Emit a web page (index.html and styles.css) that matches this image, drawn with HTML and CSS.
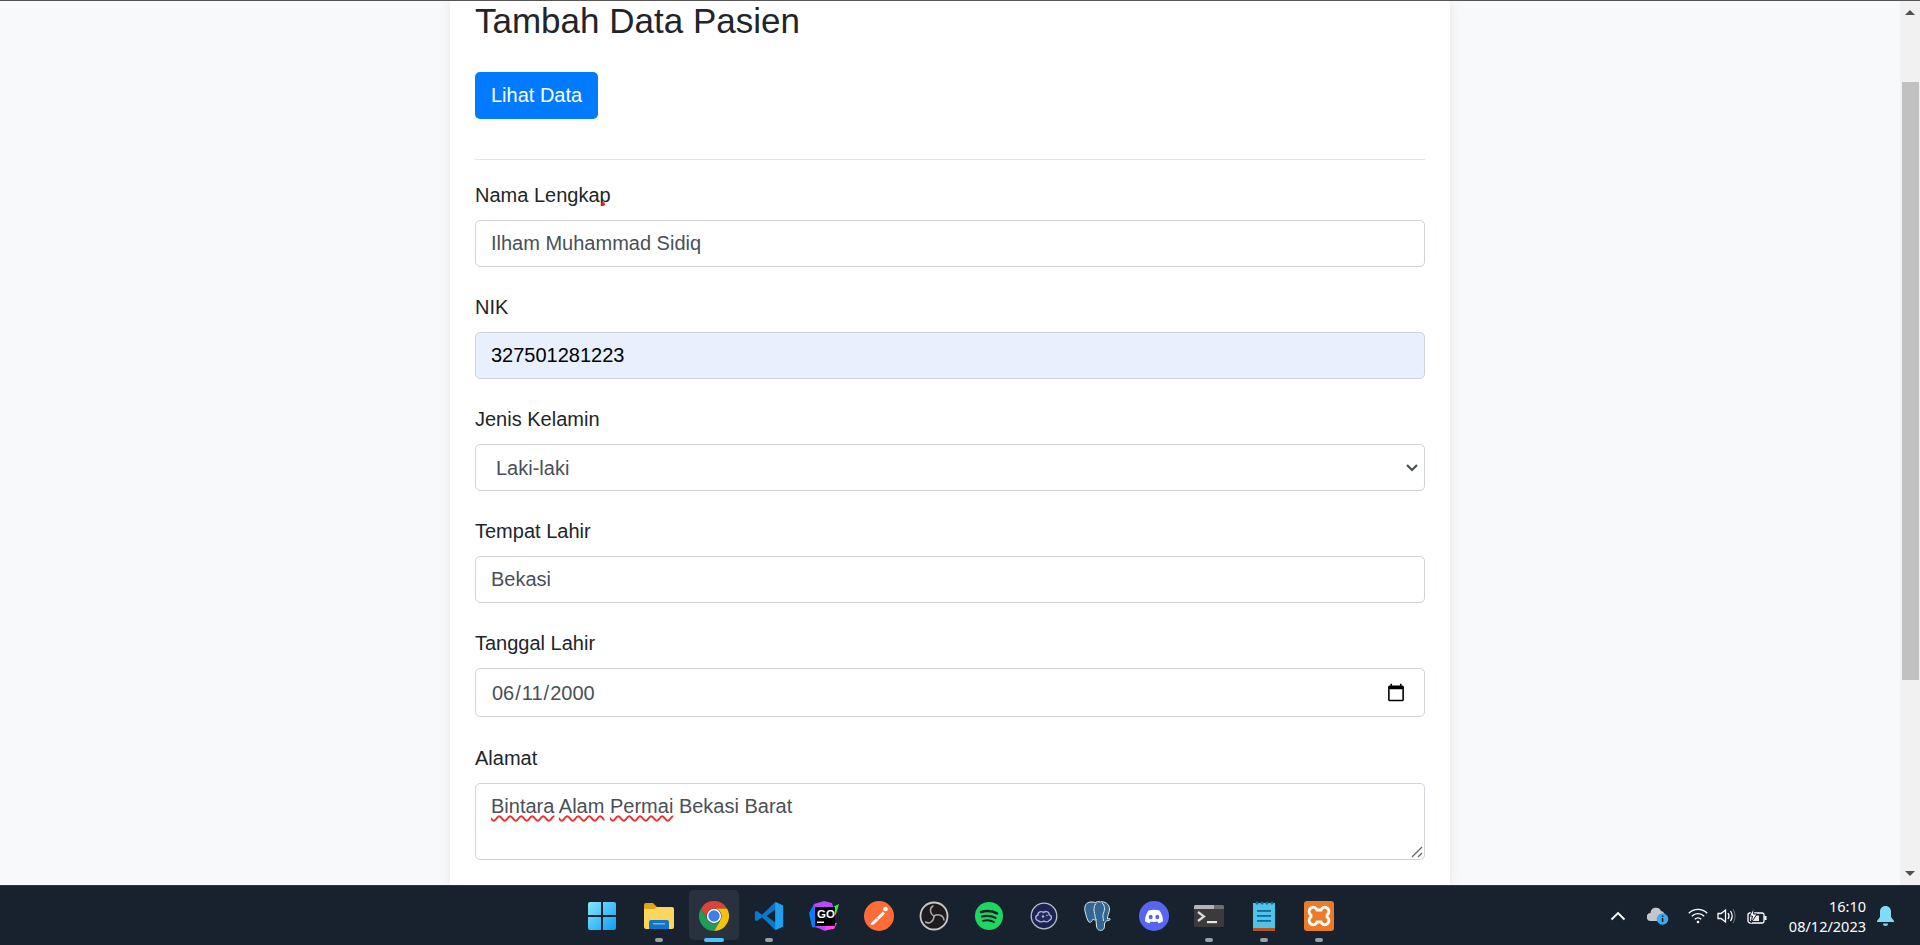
FILE: index.html
```html
<!DOCTYPE html>
<html lang="en">
<head>
<meta charset="UTF-8">
<meta name="viewport" content="width=device-width, initial-scale=1.0">
<title>Tambah Data Pasien</title>
<link rel="stylesheet" href="styles.css">
</head>

<body>
    <div class="screen">
        <div class="page">
            <main class="content">
                <div class="card">
                    <h2 class="title">Tambah Data Pasien</h2>
                    <a class="btn" href="#">Lihat Data</a>
                    <hr class="divider">
                    <form>
                        <div class="form-group">
                            <label for="nama">Nama Lengkap</label>
                            <span class="red-dot"></span>
                            <input class="form-control" id="nama" type="text" value="Ilham Muhammad Sidiq">
                        </div>
                        <div class="form-group">
                            <label for="nik">NIK</label>
                            <input class="form-control autofilled" id="nik" type="text" value="327501281223">
                        </div>
                        <div class="form-group">
                            <label for="jk">Jenis Kelamin</label>
                            <select class="form-control select-control" id="jk">
                                <option>Laki-laki</option>
                                <option>Perempuan</option>
                            </select>
                        </div>
                        <div class="form-group">
                            <label for="tempat">Tempat Lahir</label>
                            <input class="form-control" id="tempat" type="text" value="Bekasi">
                        </div>
                        <div class="form-group date-group">
                            <label for="tgl">Tanggal Lahir</label>
                            <input class="form-control date-control" id="tgl" type="date" value="2000-06-11">
                        </div>
                        <div class="form-group">
                            <label>Alamat</label>
                            <div class="form-control textarea-control" contenteditable="true"><span class="typo">Bintara</span> <span class="typo">Alam</span> <span class="typo">Permai</span> Bekasi Barat</div>
                        </div>
                    </form>
                </div>
            </main>
            <div class="scrollbar">
                <span class="arrow-up"></span>
                <div class="thumb"></div>
                <span class="arrow-down"></span>
            </div>
        </div>

        <footer class="taskbar">
            <div class="task-icons">
                <!-- start -->
                <div class="task-icon">
                    <svg class="start-icon" width="30" height="30" viewBox="0 0 30 30">
                        <defs><linearGradient id="win" x1="0" y1="0" x2="1" y2="1"><stop offset="0" stop-color="#86e8fb"/><stop offset="1" stop-color="#0a9df2"/></linearGradient></defs>
                        <path fill="url(#win)" d="M1 3a2 2 0 0 1 2-2h11v13H1zM16 1h11a2 2 0 0 1 2 2v11H16zM1 16h13v13H3a2 2 0 0 1-2-2zM16 16h13v11a2 2 0 0 1-2 2H16z"/>
                    </svg>
                </div>
                <!-- explorer -->
                <div class="task-icon has-dot">
                    <svg width="30" height="26" viewBox="0 0 30 26">
                        <path fill="#e2a418" d="M0 2a2 2 0 0 1 2-2h7l4 4h15v6H0z"/>
                        <path fill="#fdd75c" d="M0 6h10l3-2h15a2 2 0 0 1 2 2v18a2 2 0 0 1-2 2H2a2 2 0 0 1-2-2z"/>
                        <path fill="#1273c9" d="M5 19a2 2 0 0 1 2-2h16a2 2 0 0 1 2 2v7H5z"/>
                        <rect x="9" y="20" width="12" height="1.500" fill="#6fb9ee"/>
                    </svg>
                </div>
                <!-- chrome -->
                <div class="task-icon active has-dot">
                    <svg width="30" height="30" viewBox="0 0 30 30">
                        <path fill="#db4437" d="M2 7.500a15 15 0 0 1 26 0H15a7.500 7.500 0 0 0-6.500 11.250z"/>
                        <path fill="#f4c20d" d="M28 7.500A15 15 0 0 1 15 30l6.500-11.250A7.500 7.500 0 0 0 15 7.500z"/>
                        <path fill="#1f9d55" d="M15 30A15 15 0 0 1 2 7.500l6.500 11.250A7.500 7.500 0 0 0 21.500 18.750z"/>
                        <circle cx="15" cy="15" r="7.200" fill="#fff"/>
                        <circle cx="15" cy="15" r="5.700" fill="#3f7ee8"/>
                    </svg>
                </div>
                <!-- vscode -->
                <div class="task-icon has-dot">
                    <svg width="30" height="30" viewBox="0 0 100 100">
                        <path fill="#0a78cc" fill-rule="evenodd" d="M71 3 27 46 10 33l-7 3v28l7 3 17-13 44 43 26-12V15zm0 25v44L42 50z"/>
                        <path fill="#22a0f0" d="M71 3l26 12v70L71 97z"/>
                    </svg>
                </div>
                <!-- goland -->
                <div class="task-icon">
                    <svg width="30" height="30" viewBox="0 0 30 30">
                        <path fill="#087cfa" d="M5 3 0 12l3 14 9 1z"/>
                        <path fill="#b74af7" d="M5 3l10-3 8 2 3 10-2 15-8 3-9-4z"/>
                        <path fill="#ff45ed" d="M18 22h10l-3 6-9 1z"/>
                        <path fill="#3bea62" d="M24 6l6-3-3 10-2 2z"/>
                        <rect x="6" y="6" width="20" height="19" fill="#000"/>
                        <text class="go-text" x="8" y="16.500">GO</text>
                        <rect x="8" y="20.500" width="7" height="1.500" fill="#fff"/>
                    </svg>
                </div>
                <!-- postman -->
                <div class="task-icon">
                    <svg width="30" height="30" viewBox="0 0 30 30">
                        <circle cx="15" cy="15" r="15" fill="#ff6c37"/>
                        <circle cx="21.500" cy="8" r="2.300" fill="#fff"/>
                        <path fill="#fff" d="M19 10.500 21 12.500 11.500 22 9.500 23.500 7.500 24 6.500 23 8 21z"/>
                        <path fill="none" stroke="#ff6c37" stroke-width=".8" d="M12 16.500l2 2"/>
                    </svg>
                </div>
                <!-- obs -->
                <div class="task-icon">
                    <svg width="30" height="30" viewBox="0 0 30 30">
                        <circle cx="15" cy="15" r="13.500" fill="#1d1b1e" stroke="#c9c9c9" stroke-width="1.800"/>
                        <g fill="none" stroke="#a9a7aa" stroke-width="1.500" stroke-linecap="round">
                            <path d="M15 15C11 13 10 7 14 5"/>
                            <path d="M15 15C19 12.500 24.500 14 25 19"/>
                            <path d="M15 15C15 20 10.500 23.500 6.500 21"/>
                        </g>
                    </svg>
                </div>
                <!-- spotify -->
                <div class="task-icon">
                    <svg width="28" height="28" viewBox="0 0 28 28">
                        <circle cx="14" cy="14" r="14" fill="#1ed760"/>
                        <g fill="none" stroke="#14202c" stroke-linecap="round">
                            <path stroke-width="2.600" d="M6 10c5-1.500 11-1.200 16 1.300"/>
                            <path stroke-width="2.200" d="M7 14.500c4.500-1.200 9.500-.8 13.500 1.400"/>
                            <path stroke-width="1.800" d="M8 18.800c3.800-.9 7.800-.6 11 1.200"/>
                        </g>
                    </svg>
                </div>
                <!-- cloud app -->
                <div class="task-icon">
                    <svg width="28" height="28" viewBox="0 0 28 28">
                        <circle cx="14" cy="14" r="12.800" fill="#1d2350" stroke="#b9bdcc" stroke-width="1.300"/>
                        <path fill="#232b5e" stroke="#aeb4d6" stroke-width="1.300" d="M8 18.500c-3-.5-3-5 0-5.500-.5-3 3.500-4.500 5.500-2.500 2-2 6-.8 5.700 2.300 3 .5 3 5-.2 5.700-1 1.800-3.500 1.800-5 .6-1.500 1.200-4.500 1.200-6-.6z"/>
                        <circle cx="13" cy="14.500" r="1.200" fill="#aeb4d6"/>
                        <circle cx="17" cy="13.500" r=".8" fill="#aeb4d6"/>
                    </svg>
                </div>
                <!-- postgres -->
                <div class="task-icon">
                    <svg width="30" height="30" viewBox="0 0 30 30">
                        <path fill="#336791" stroke="#dfe8ef" stroke-width="1" d="M7 1c-5 0-7 4-6 9 1 4 2 9 4 11 2 1 3-1 4-3 1 1 2 1 3 1l.5 6c.5 4 3 5 6 4 2-1 2-3 2-6 0-2 1-2 2-3l3-1c2-1 0-2-2-1-.5-3 2-6 2-10 0-5-5-8-9-7-2-.5-4-.5-5 .5C10 1 8.500 1 7 1z"/>
                        <path fill="none" stroke="#dfe8ef" stroke-width="1" d="M12.500 2c-3 2-3 8-1.500 12 0 2 .5 4 1.500 5M18 2c3 2 3 7 1.500 10-1 2-.5 4 0 8"/>
                    </svg>
                </div>
                <!-- discord -->
                <div class="task-icon">
                    <svg width="30" height="30" viewBox="0 0 30 30">
                        <circle cx="15" cy="15" r="15" fill="#5865f2"/>
                        <path fill="#fff" d="M9.500 9.500Q15 7.800 20.500 9.500 24 14.500 24 20.200 22 21.800 19.500 22.300L18.400 20.600Q15 21.500 11.600 20.600L10.500 22.300Q8 21.800 6 20.200 6 14.500 9.500 9.500z"/>
                        <ellipse cx="11.700" cy="16" rx="2" ry="2.300" fill="#5865f2"/>
                        <ellipse cx="18.300" cy="16" rx="2" ry="2.300" fill="#5865f2"/>
                    </svg>
                </div>
                <!-- terminal -->
                <div class="task-icon has-dot">
                    <svg width="30" height="30" viewBox="0 0 30 30">
                        <rect y="4" width="30" height="22" rx="1.500" fill="#3b3b3b"/>
                        <path fill="#b4b4b4" d="M0 5.500A1.500 1.500 0 0 1 1.500 4H20v4H0z"/>
                        <path fill="#6e6e6e" d="M20 4h8.500A1.500 1.500 0 0 1 30 5.500V8H20z"/>
                        <path fill="none" stroke="#dcdcdc" stroke-width="2.200" d="M4 11l6 4.500L4 20"/>
                        <rect x="13" y="20" width="10" height="2.200" fill="#e6e6e6"/>
                    </svg>
                </div>
                <!-- notepad -->
                <div class="task-icon has-dot">
                    <svg width="22" height="30" viewBox="0 0 22 30">
                        <rect y="2" width="22" height="26" fill="#4fc3ea"/>
                        <rect y="27" width="22" height="3" fill="#b4551d"/>
                        <g fill="#0f6d94">
                            <circle cx="4" cy="2" r="1.500"/><circle cx="9" cy="2" r="1.500"/><circle cx="14" cy="2" r="1.500"/><circle cx="19" cy="2" r="1.500"/>
                            <rect x="4" y="9" width="14" height="1.800"/><rect x="4" y="14" width="14" height="1.800"/><rect x="4" y="19" width="14" height="1.800"/>
                        </g>
                    </svg>
                </div>
                <!-- xampp -->
                <div class="task-icon has-dot">
                    <svg width="30" height="30" viewBox="0 0 30 30">
                        <rect width="30" height="30" rx="3" fill="#ec7a26"/>
                        <path fill="none" stroke="#fff" stroke-width="2.800" d="M7 7c3-2 5 0 6 2h4c1-2 3-4 6-2 3 2 2 6 0 7v2c2 1 3 5 0 7-3 2-5 0-6-2h-4c-1 2-3 4-6 2-3-2-2-6 0-7v-2c-2-1-3-5 0-7z"/>
                    </svg>
                </div>
            </div>

            <div class="tray">
                <div class="tray-item">
                    <svg width="16" height="10" viewBox="0 0 16 10"><path fill="none" stroke="#fff" stroke-width="1.800" d="M1.500 8.500 8 2l6.500 6.500"/></svg>
                </div>
                <div class="tray-item cloud">
                    <svg width="22" height="18" viewBox="0 0 22 18">
                        <path fill="#c3c7cc" d="M4 14a4 4 0 0 1-.5-8A5.500 5.500 0 0 1 14 4a4.500 4.500 0 0 1 3 7v3z"/>
                        <circle cx="15.500" cy="12" r="5.800" fill="#3fa9ee"/>
                        <rect x="14.800" y="11" width="1.500" height="4" fill="#10202e"/>
                        <rect x="14.800" y="8.500" width="1.500" height="1.500" fill="#10202e"/>
                    </svg>
                </div>
                <div class="tray-item wifi">
                    <svg width="20" height="16" viewBox="0 0 20 16">
                        <g fill="none" stroke="#fff" stroke-width="1.400">
                            <path d="M.8 5.200a13 13 0 0 1 18.400 0"/>
                            <path d="M3.800 8.200a8.800 8.800 0 0 1 12.400 0"/>
                            <path d="M6.800 11.200a4.500 4.500 0 0 1 6.400 0"/>
                        </g>
                        <circle cx="10" cy="14" r="1.300" fill="#fff"/>
                    </svg>
                </div>
                <div class="tray-item volume">
                    <svg width="20" height="16" viewBox="0 0 20 16">
                        <path fill="none" stroke="#fff" stroke-width="1.300" d="M1 5.500h3L8.500 2v12L4 10.500H1z"/>
                        <path fill="none" stroke="#fff" stroke-width="1.300" d="M11 5c1.200 1.800 1.200 4.200 0 6M13.500 3c2 3 2 7 0 10"/>
                        <path fill="none" stroke="#667" stroke-width="1.100" d="M16 1c2.700 4 2.700 10 0 14"/>
                    </svg>
                </div>
                <div class="tray-item battery">
                    <svg width="20" height="18" viewBox="0 0 20 18">
                        <rect x="1" y="6" width="16" height="10" rx="2" fill="none" stroke="#fff" stroke-width="1.300"/>
                        <rect x="17.500" y="9" width="2" height="4" fill="#fff"/>
                        <path fill="#e8e8e8" d="M3 8.500h9v5.500H3z"/>
                        <path fill="#fff" stroke="#16212e" stroke-width="1" d="M7 .5 2.500 9h3L4 16l6-9H6.500z"/>
                    </svg>
                </div>
                <div class="clock">
                    <div>16:10</div>
                    <div>08/12/2023</div>
                </div>
                <div class="tray-item bell">
                    <svg width="17" height="20" viewBox="0 0 17 20">
                        <path fill="#7fdcf7" d="M8.500 0C5 0 3 2.500 3 6v5l-3 4v1h17v-1l-3-4V6c0-3.500-2-6-5.500-6z"/>
                        <path fill="#7fdcf7" d="M6 17.500h5A2.500 2.500 0 0 1 6 17.500z"/>
                    </svg>
                </div>
            </div>
        </footer>
    </div>
</body>
</html>
```

FILE: styles.css
```css
body {
    font-family: "Liberation Sans", Arial, sans-serif;
    margin: 0;
    padding: 0;
    background-color: #f8f9fa;
    color: #212529;
    overflow: hidden;
}

.screen {
    height: 945px;
    display: flex;
    flex-direction: column;
}

.page {
    flex: 1;
    display: flex;
    min-height: 0;
    border-top: 1px solid #555;
}

.content {
    flex: 1;
    display: flex;
    justify-content: center;
    overflow: hidden;
}

/* card */
.card {
    width: 1000px;
    height: 100%;
    box-sizing: border-box;
    padding: 0 25px;
    background-color: white;
    box-shadow: 0 0 12px rgba(0, 0, 0, 0.08);
}

.title {
    font-size: 35px;
    font-weight: 400;
    line-height: 42px;
    margin: -1px 0 30px;
}

.btn {
    display: inline-block;
    height: 47px;
    box-sizing: border-box;
    padding: 0 16px;
    line-height: 47px;
    font-size: 20px;
    color: white;
    text-decoration: none;
    background-color: #007bff;
    border-radius: 5px;
    vertical-align: top;
}

.divider {
    border: 0;
    border-top: 1px solid #e3e4e6;
    margin: 40px 0 20px;
}

/* form */
.form-group {
    position: relative;
    margin-bottom: 25px;
}

.date-group {
    margin-bottom: 26px;
}

.form-group label {
    display: block;
    font-size: 20px;
    line-height: 30px;
    margin-bottom: 10px;
}

.red-dot {
    position: absolute;
    left: 126px;
    top: 22px;
    width: 4px;
    height: 4px;
    border-radius: 50%;
    background-color: #e8201c;
}

.form-control {
    display: block;
    width: 100%;
    height: 47px;
    box-sizing: border-box;
    padding: 7px 15px;
    font-family: inherit;
    font-size: 20px;
    line-height: 30px;
    color: #495057;
    background-color: white;
    border: 1px solid #ced4da;
    border-radius: 5px;
}

.autofilled {
    background-color: #e8f0fe;
    color: black;
}

.select-control {
    appearance: none;
    padding-left: 20px;
    background-image: url("data:image/svg+xml,%3Csvg xmlns='http://www.w3.org/2000/svg' width='12' height='8'%3E%3Cpath fill='none' stroke='%23495057' stroke-width='2.200' d='M1 1l5 5 5-5'/%3E%3C/svg%3E");
    background-repeat: no-repeat;
    background-position: right 6px center;
}

.date-control {
    height: 49px;
}

.date-control::-webkit-calendar-picker-indicator {
    width: 20px;
    height: 20px;
    padding: 0;
    margin-right: 3px;
}

.textarea-control {
    height: 77px;
    resize: vertical;
    overflow: auto;
    padding-top: 7px;
}

.textarea-control::-webkit-resizer {
    background-image: url("data:image/svg+xml,%3Csvg xmlns='http://www.w3.org/2000/svg' width='15' height='15'%3E%3Cpath fill='none' stroke='%23666' stroke-width='1.300' d='M3 13l10-10M9 13l4-4'/%3E%3C/svg%3E");
}

.typo {
    text-decoration: underline wavy #f52a2a 1.500px;
    text-underline-offset: 2px;
}

/* scrollbar */
.scrollbar {
    width: 20px;
    display: flex;
    flex-direction: column;
    align-items: center;
    background-color: #f1f1f1;
}

.arrow-up {
    margin-top: 9px;
    border-left: 5px solid transparent;
    border-right: 5px solid transparent;
    border-bottom: 5px solid #505050;
}

.thumb {
    width: 17px;
    height: 598px;
    margin-top: 67px;
    background-color: #c1c1c1;
}

.arrow-down {
    margin-top: auto;
    margin-bottom: 9px;
    border-left: 5px solid transparent;
    border-right: 5px solid transparent;
    border-top: 5px solid #505050;
}

/* taskbar */
.taskbar {
    height: 60px;
    flex-shrink: 0;
    display: flex;
    padding-left: 576px;
    background-color: #18222f;
    border-top: 1px solid #2a333e;
    box-sizing: border-box;
}

.task-icons {
    display: flex;
}

.task-icon {
    position: relative;
    width: 55px;
    display: flex;
    align-items: center;
    justify-content: center;
}

.task-icon.active::before {
    content: "";
    position: absolute;
    left: 3px;
    top: 4px;
    width: 50px;
    height: 50px;
    border-radius: 5px;
    background-color: rgba(255, 255, 255, 0.07);
}

.task-icon svg {
    position: relative;
}

.start-icon {
    margin-right: 3px;
}

.task-icon.has-dot::after {
    content: "";
    position: absolute;
    left: 24px;
    bottom: 3px;
    width: 8px;
    height: 4px;
    border-radius: 2px;
    background-color: #9aa0a8;
}

.task-icon.active::after {
    left: 18px;
    width: 20px;
    background-color: #4cc2ff;
}

.go-text {
    font-family: "Liberation Sans", Arial, sans-serif;
    font-size: 11.500px;
    font-weight: 700;
    fill: white;
}

.tray {
    margin-left: auto;
    display: flex;
    align-items: center;
    padding-right: 25px;
}

.tray-item {
    width: 30px;
    display: flex;
    align-items: center;
    justify-content: center;
}

.cloud, .wifi {
    margin-left: 10px;
}

.volume {
    width: 28px;
}

.battery {
    margin-left: 1px;
}

.clock {
    width: 94px;
    font-family: "Noto Sans", sans-serif;
    font-size: 14.500px;
    line-height: 20px;
    color: white;
    text-align: right;
}

.tray-item.bell {
    width: 20px;
    margin-left: 9px;
}
```
